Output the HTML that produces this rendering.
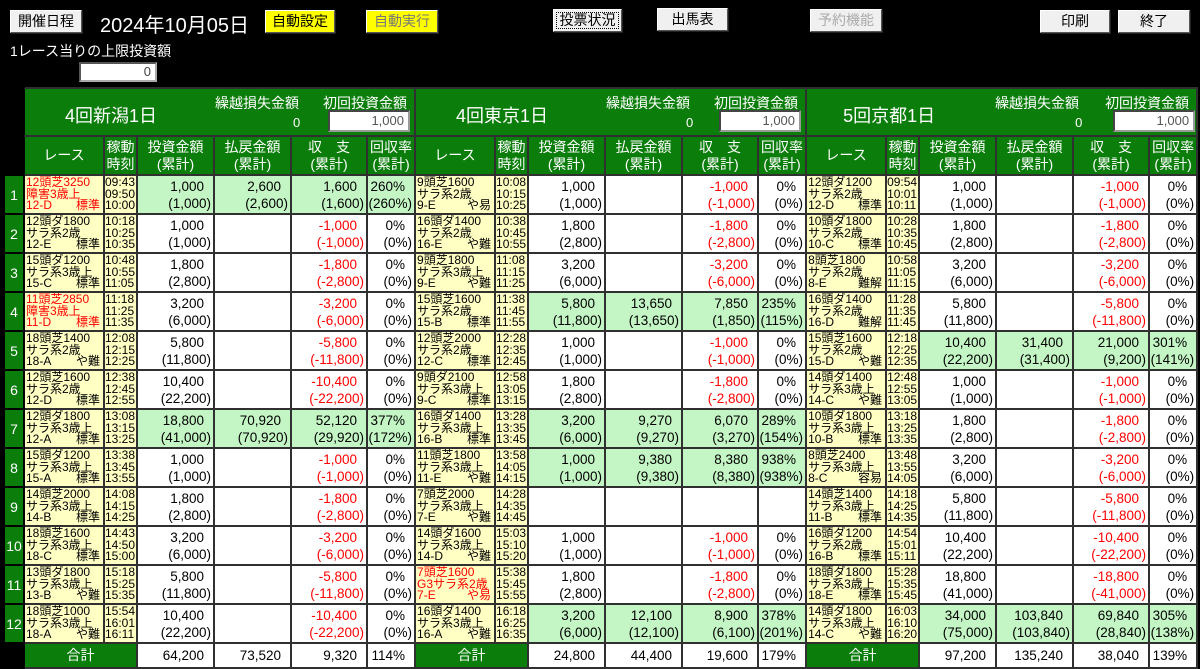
<!DOCTYPE html>
<html><head><meta charset="utf-8"><style>
*{margin:0;padding:0;box-sizing:border-box}
body{width:1200px;height:667px;background:#000;overflow:hidden;position:relative;font-family:"Liberation Sans","Noto Sans CJK JP",sans-serif;color:#000}
.btn{position:absolute;background:#f0f0f0;border:1px solid #fff;border-right-color:#555;border-bottom-color:#555;box-shadow:1px 1px 0 #222;font-size:14px;text-align:center;line-height:21px;height:23px}
.y{background:#ffff00}
.lbl{position:absolute;color:#fff}
.inp{position:absolute;background:#fff;border:2px inset #aaa;text-align:right;font-size:13px;color:#444;padding-right:4px;line-height:16px}
table{position:absolute;left:3px;top:87px;border-collapse:collapse;table-layout:fixed;width:1193px}
td{border:2px solid #303030;overflow:hidden;white-space:nowrap;vertical-align:middle}
tr.d{height:39px}
td.no{background:#0a7d0a;color:#fff;text-align:center;font-size:14px;border-color:#000}
td.bk{background:#000;border-color:#000}
td.hd{background:#0a7d0a;color:#fff;text-align:center;font-size:14px;line-height:17px}
td.r{background:#ffffc4;font-size:12px;line-height:11.5px;padding:0 1px}
td.r div{height:11.5px}
td.r div.s{display:flex;justify-content:space-between;padding-right:2px}
td.t{background:#ffffc4;font-size:12px;line-height:11.5px;padding-left:0}
td.n{background:#fff;text-align:right;font-size:13.5px;line-height:17px;padding-right:2px}
td.n b{display:block;font-weight:normal;padding-right:7px}
td.n i{display:block;font-style:normal}
td.g{background:#c4f5c4}
.red{color:#f00}
td.sec{background:#0a7d0a;position:relative;height:47px;color:#fff}
.vn{position:absolute;top:13px;font-size:18px}
.k1{position:absolute;top:4px;font-size:14px}
.k0{position:absolute;top:26px;font-size:13px}
.k2{position:absolute;top:4px;font-size:14px}
.sin{position:absolute;top:21px;width:82px;height:22px;background:#fff;border:2px inset #999;color:#555;text-align:right;padding-right:4px;font-size:13px;line-height:18px}
tr.tot{height:25px}
tr.tot td.n{font-size:13.5px}
</style></head><body>
<div class="btn" style="left:10px;top:10px;width:72px">開催日程</div>
<div class="lbl" style="left:100px;top:9px;font-size:20px">2024年10月05日</div>
<div class="btn y" style="left:265px;top:10px;width:70px">自動設定</div>
<div class="btn y" style="left:366px;top:10px;width:72px;color:#777">自動実行</div>
<div class="btn" style="left:553px;top:9px;width:69px;outline:1px dotted #000;outline-offset:-4px">投票状況</div>
<div class="btn" style="left:657px;top:8px;width:71px">出馬表</div>
<div class="btn" style="left:810px;top:9px;width:72px;color:#aaa">予約機能</div>
<div class="btn" style="left:1040px;top:10px;width:70px">印刷</div>
<div class="btn" style="left:1118px;top:10px;width:72px">終了</div>
<div class="lbl" style="left:10px;top:41px;font-size:14px">1レース当りの上限投資額</div>
<div class="inp" style="left:79px;top:62px;width:78px;height:20px">0</div>
<table>
<colgroup><col style="width:20px"><col style="width:80px"><col style="width:33px"><col style="width:77px"><col style="width:77px"><col style="width:76px"><col style="width:48px"><col style="width:80px"><col style="width:33px"><col style="width:77px"><col style="width:77px"><col style="width:76px"><col style="width:48px"><col style="width:80px"><col style="width:33px"><col style="width:77px"><col style="width:77px"><col style="width:76px"><col style="width:48px"></colgroup>
<tr style="height:48px"><td class="bk"></td>
<td colspan="6" class="sec"><span class="vn" style="left:40px">4回新潟1日</span><span class="k1" style="left:190px">繰越損失金額</span><span class="k0" style="left:268px">0</span><span class="k2" style="left:298px">初回投資金額</span><div class="sin" style="left:303px">1,000</div></td>
<td colspan="6" class="sec"><span class="vn" style="left:40px">4回東京1日</span><span class="k1" style="left:190px">繰越損失金額</span><span class="k0" style="left:270px">0</span><span class="k2" style="left:298px">初回投資金額</span><div class="sin" style="left:303px">1,000</div></td>
<td colspan="6" class="sec"><span class="vn" style="left:36px">5回京都1日</span><span class="k1" style="left:188px">繰越損失金額</span><span class="k0" style="left:268px">0</span><span class="k2" style="left:298px">初回投資金額</span><div class="sin" style="left:306px">1,000</div></td></tr>
<tr style="height:39px"><td class="bk"></td>
<td class="hd">レース</td><td class="hd">稼動<br>時刻</td><td class="hd">投資金額<br>(累計)</td><td class="hd">払戻金額<br>(累計)</td><td class="hd">収　支<br>(累計)</td><td class="hd">回収率<br>(累計)</td>
<td class="hd">レース</td><td class="hd">稼動<br>時刻</td><td class="hd">投資金額<br>(累計)</td><td class="hd">払戻金額<br>(累計)</td><td class="hd">収　支<br>(累計)</td><td class="hd">回収率<br>(累計)</td>
<td class="hd">レース</td><td class="hd">稼動<br>時刻</td><td class="hd">投資金額<br>(累計)</td><td class="hd">払戻金額<br>(累計)</td><td class="hd">収　支<br>(累計)</td><td class="hd">回収率<br>(累計)</td></tr>

<tr class="d"><td class="no">1</td>
<td class="r red"><div>12頭芝3250</div><div>障害3歳上</div><div class="s"><span>12-D</span><span>標準</span></div></td><td class="t">09:43<br>09:50<br>10:00</td><td class="n g"><b>1,000</b><i>(1,000)</i></td><td class="n g"><b>2,600</b><i>(2,600)</i></td><td class="n g"><b>1,600</b><i>(1,600)</i></td><td class="n g"><b>260%</b><i>(260%)</i></td>
<td class="r"><div>9頭芝1600</div><div>サラ系2歳</div><div class="s"><span>9-E</span><span>や易</span></div></td><td class="t">10:08<br>10:15<br>10:25</td><td class="n"><b>1,000</b><i>(1,000)</i></td><td class="n"></td><td class="n red"><b>-1,000</b><i>(-1,000)</i></td><td class="n"><b>0%</b><i>(0%)</i></td>
<td class="r"><div>12頭ダ1200</div><div>サラ系2歳</div><div class="s"><span>12-D</span><span>標準</span></div></td><td class="t">09:54<br>10:01<br>10:11</td><td class="n"><b>1,000</b><i>(1,000)</i></td><td class="n"></td><td class="n red"><b>-1,000</b><i>(-1,000)</i></td><td class="n"><b>0%</b><i>(0%)</i></td></tr>

<tr class="d"><td class="no">2</td>
<td class="r"><div>12頭ダ1800</div><div>サラ系2歳</div><div class="s"><span>12-E</span><span>標準</span></div></td><td class="t">10:18<br>10:25<br>10:35</td><td class="n"><b>1,000</b><i>(1,000)</i></td><td class="n"></td><td class="n red"><b>-1,000</b><i>(-1,000)</i></td><td class="n"><b>0%</b><i>(0%)</i></td>
<td class="r"><div>16頭ダ1400</div><div>サラ系2歳</div><div class="s"><span>16-E</span><span>や難</span></div></td><td class="t">10:38<br>10:45<br>10:55</td><td class="n"><b>1,800</b><i>(2,800)</i></td><td class="n"></td><td class="n red"><b>-1,800</b><i>(-2,800)</i></td><td class="n"><b>0%</b><i>(0%)</i></td>
<td class="r"><div>10頭ダ1800</div><div>サラ系2歳</div><div class="s"><span>10-C</span><span>標準</span></div></td><td class="t">10:28<br>10:35<br>10:45</td><td class="n"><b>1,800</b><i>(2,800)</i></td><td class="n"></td><td class="n red"><b>-1,800</b><i>(-2,800)</i></td><td class="n"><b>0%</b><i>(0%)</i></td></tr>

<tr class="d"><td class="no">3</td>
<td class="r"><div>15頭ダ1200</div><div>サラ系3歳上</div><div class="s"><span>15-C</span><span>標準</span></div></td><td class="t">10:48<br>10:55<br>11:05</td><td class="n"><b>1,800</b><i>(2,800)</i></td><td class="n"></td><td class="n red"><b>-1,800</b><i>(-2,800)</i></td><td class="n"><b>0%</b><i>(0%)</i></td>
<td class="r"><div>9頭芝1800</div><div>サラ系3歳上</div><div class="s"><span>9-E</span><span>や難</span></div></td><td class="t">11:08<br>11:15<br>11:25</td><td class="n"><b>3,200</b><i>(6,000)</i></td><td class="n"></td><td class="n red"><b>-3,200</b><i>(-6,000)</i></td><td class="n"><b>0%</b><i>(0%)</i></td>
<td class="r"><div>8頭芝1800</div><div>サラ系2歳</div><div class="s"><span>8-E</span><span>難解</span></div></td><td class="t">10:58<br>11:05<br>11:15</td><td class="n"><b>3,200</b><i>(6,000)</i></td><td class="n"></td><td class="n red"><b>-3,200</b><i>(-6,000)</i></td><td class="n"><b>0%</b><i>(0%)</i></td></tr>

<tr class="d"><td class="no">4</td>
<td class="r red"><div>11頭芝2850</div><div>障害3歳上</div><div class="s"><span>11-D</span><span>標準</span></div></td><td class="t">11:18<br>11:25<br>11:35</td><td class="n"><b>3,200</b><i>(6,000)</i></td><td class="n"></td><td class="n red"><b>-3,200</b><i>(-6,000)</i></td><td class="n"><b>0%</b><i>(0%)</i></td>
<td class="r"><div>15頭芝1600</div><div>サラ系2歳</div><div class="s"><span>15-B</span><span>標準</span></div></td><td class="t">11:38<br>11:45<br>11:55</td><td class="n g"><b>5,800</b><i>(11,800)</i></td><td class="n g"><b>13,650</b><i>(13,650)</i></td><td class="n g"><b>7,850</b><i>(1,850)</i></td><td class="n g"><b>235%</b><i>(115%)</i></td>
<td class="r"><div>16頭ダ1400</div><div>サラ系2歳</div><div class="s"><span>16-D</span><span>難解</span></div></td><td class="t">11:28<br>11:35<br>11:45</td><td class="n"><b>5,800</b><i>(11,800)</i></td><td class="n"></td><td class="n red"><b>-5,800</b><i>(-11,800)</i></td><td class="n"><b>0%</b><i>(0%)</i></td></tr>

<tr class="d"><td class="no">5</td>
<td class="r"><div>18頭芝1400</div><div>サラ系2歳</div><div class="s"><span>18-A</span><span>や難</span></div></td><td class="t">12:08<br>12:15<br>12:25</td><td class="n"><b>5,800</b><i>(11,800)</i></td><td class="n"></td><td class="n red"><b>-5,800</b><i>(-11,800)</i></td><td class="n"><b>0%</b><i>(0%)</i></td>
<td class="r"><div>12頭芝2000</div><div>サラ系2歳</div><div class="s"><span>12-C</span><span>標準</span></div></td><td class="t">12:28<br>12:35<br>12:45</td><td class="n"><b>1,000</b><i>(1,000)</i></td><td class="n"></td><td class="n red"><b>-1,000</b><i>(-1,000)</i></td><td class="n"><b>0%</b><i>(0%)</i></td>
<td class="r"><div>15頭芝1600</div><div>サラ系2歳</div><div class="s"><span>15-D</span><span>や難</span></div></td><td class="t">12:18<br>12:25<br>12:35</td><td class="n g"><b>10,400</b><i>(22,200)</i></td><td class="n g"><b>31,400</b><i>(31,400)</i></td><td class="n g"><b>21,000</b><i>(9,200)</i></td><td class="n g"><b>301%</b><i>(141%)</i></td></tr>

<tr class="d"><td class="no">6</td>
<td class="r"><div>12頭芝1600</div><div>サラ系2歳</div><div class="s"><span>12-D</span><span>標準</span></div></td><td class="t">12:38<br>12:45<br>12:55</td><td class="n"><b>10,400</b><i>(22,200)</i></td><td class="n"></td><td class="n red"><b>-10,400</b><i>(-22,200)</i></td><td class="n"><b>0%</b><i>(0%)</i></td>
<td class="r"><div>9頭ダ2100</div><div>サラ系3歳上</div><div class="s"><span>9-C</span><span>標準</span></div></td><td class="t">12:58<br>13:05<br>13:15</td><td class="n"><b>1,800</b><i>(2,800)</i></td><td class="n"></td><td class="n red"><b>-1,800</b><i>(-2,800)</i></td><td class="n"><b>0%</b><i>(0%)</i></td>
<td class="r"><div>14頭ダ1400</div><div>サラ系3歳上</div><div class="s"><span>14-C</span><span>や難</span></div></td><td class="t">12:48<br>12:55<br>13:05</td><td class="n"><b>1,000</b><i>(1,000)</i></td><td class="n"></td><td class="n red"><b>-1,000</b><i>(-1,000)</i></td><td class="n"><b>0%</b><i>(0%)</i></td></tr>

<tr class="d"><td class="no">7</td>
<td class="r"><div>12頭ダ1800</div><div>サラ系3歳上</div><div class="s"><span>12-A</span><span>標準</span></div></td><td class="t">13:08<br>13:15<br>13:25</td><td class="n g"><b>18,800</b><i>(41,000)</i></td><td class="n g"><b>70,920</b><i>(70,920)</i></td><td class="n g"><b>52,120</b><i>(29,920)</i></td><td class="n g"><b>377%</b><i>(172%)</i></td>
<td class="r"><div>16頭ダ1400</div><div>サラ系3歳上</div><div class="s"><span>16-B</span><span>標準</span></div></td><td class="t">13:28<br>13:35<br>13:45</td><td class="n g"><b>3,200</b><i>(6,000)</i></td><td class="n g"><b>9,270</b><i>(9,270)</i></td><td class="n g"><b>6,070</b><i>(3,270)</i></td><td class="n g"><b>289%</b><i>(154%)</i></td>
<td class="r"><div>10頭ダ1800</div><div>サラ系3歳上</div><div class="s"><span>10-B</span><span>標準</span></div></td><td class="t">13:18<br>13:25<br>13:35</td><td class="n"><b>1,800</b><i>(2,800)</i></td><td class="n"></td><td class="n red"><b>-1,800</b><i>(-2,800)</i></td><td class="n"><b>0%</b><i>(0%)</i></td></tr>

<tr class="d"><td class="no">8</td>
<td class="r"><div>15頭ダ1200</div><div>サラ系3歳上</div><div class="s"><span>15-A</span><span>標準</span></div></td><td class="t">13:38<br>13:45<br>13:55</td><td class="n"><b>1,000</b><i>(1,000)</i></td><td class="n"></td><td class="n red"><b>-1,000</b><i>(-1,000)</i></td><td class="n"><b>0%</b><i>(0%)</i></td>
<td class="r"><div>11頭芝1800</div><div>サラ系3歳上</div><div class="s"><span>11-E</span><span>や難</span></div></td><td class="t">13:58<br>14:05<br>14:15</td><td class="n g"><b>1,000</b><i>(1,000)</i></td><td class="n g"><b>9,380</b><i>(9,380)</i></td><td class="n g"><b>8,380</b><i>(8,380)</i></td><td class="n g"><b>938%</b><i>(938%)</i></td>
<td class="r"><div>8頭芝2400</div><div>サラ系3歳上</div><div class="s"><span>8-C</span><span>容易</span></div></td><td class="t">13:48<br>13:55<br>14:05</td><td class="n"><b>3,200</b><i>(6,000)</i></td><td class="n"></td><td class="n red"><b>-3,200</b><i>(-6,000)</i></td><td class="n"><b>0%</b><i>(0%)</i></td></tr>

<tr class="d"><td class="no">9</td>
<td class="r"><div>14頭芝2000</div><div>サラ系3歳上</div><div class="s"><span>14-B</span><span>標準</span></div></td><td class="t">14:08<br>14:15<br>14:25</td><td class="n"><b>1,800</b><i>(2,800)</i></td><td class="n"></td><td class="n red"><b>-1,800</b><i>(-2,800)</i></td><td class="n"><b>0%</b><i>(0%)</i></td>
<td class="r"><div>7頭芝2000</div><div>サラ系3歳上</div><div class="s"><span>7-E</span><span>や難</span></div></td><td class="t">14:28<br>14:35<br>14:45</td><td class="n"></td><td class="n"></td><td class="n"></td><td class="n"></td>
<td class="r"><div>14頭芝1400</div><div>サラ系3歳上</div><div class="s"><span>11-B</span><span>標準</span></div></td><td class="t">14:18<br>14:25<br>14:35</td><td class="n"><b>5,800</b><i>(11,800)</i></td><td class="n"></td><td class="n red"><b>-5,800</b><i>(-11,800)</i></td><td class="n"><b>0%</b><i>(0%)</i></td></tr>

<tr class="d"><td class="no">10</td>
<td class="r"><div>18頭芝1600</div><div>サラ系3歳上</div><div class="s"><span>18-C</span><span>標準</span></div></td><td class="t">14:43<br>14:50<br>15:00</td><td class="n"><b>3,200</b><i>(6,000)</i></td><td class="n"></td><td class="n red"><b>-3,200</b><i>(-6,000)</i></td><td class="n"><b>0%</b><i>(0%)</i></td>
<td class="r"><div>14頭ダ1600</div><div>サラ系3歳上</div><div class="s"><span>14-D</span><span>や難</span></div></td><td class="t">15:03<br>15:10<br>15:20</td><td class="n"><b>1,000</b><i>(1,000)</i></td><td class="n"></td><td class="n red"><b>-1,000</b><i>(-1,000)</i></td><td class="n"><b>0%</b><i>(0%)</i></td>
<td class="r"><div>16頭ダ1200</div><div>サラ系2歳</div><div class="s"><span>16-B</span><span>標準</span></div></td><td class="t">14:54<br>15:01<br>15:11</td><td class="n"><b>10,400</b><i>(22,200)</i></td><td class="n"></td><td class="n red"><b>-10,400</b><i>(-22,200)</i></td><td class="n"><b>0%</b><i>(0%)</i></td></tr>

<tr class="d"><td class="no">11</td>
<td class="r"><div>13頭ダ1800</div><div>サラ系3歳上</div><div class="s"><span>13-B</span><span>や難</span></div></td><td class="t">15:18<br>15:25<br>15:35</td><td class="n"><b>5,800</b><i>(11,800)</i></td><td class="n"></td><td class="n red"><b>-5,800</b><i>(-11,800)</i></td><td class="n"><b>0%</b><i>(0%)</i></td>
<td class="r red"><div>7頭芝1600</div><div>G3サラ系2歳</div><div class="s"><span>7-E</span><span>や易</span></div></td><td class="t">15:38<br>15:45<br>15:55</td><td class="n"><b>1,800</b><i>(2,800)</i></td><td class="n"></td><td class="n red"><b>-1,800</b><i>(-2,800)</i></td><td class="n"><b>0%</b><i>(0%)</i></td>
<td class="r"><div>18頭ダ1800</div><div>サラ系3歳上</div><div class="s"><span>18-E</span><span>標準</span></div></td><td class="t">15:28<br>15:35<br>15:45</td><td class="n"><b>18,800</b><i>(41,000)</i></td><td class="n"></td><td class="n red"><b>-18,800</b><i>(-41,000)</i></td><td class="n"><b>0%</b><i>(0%)</i></td></tr>

<tr class="d"><td class="no">12</td>
<td class="r"><div>18頭芝1000</div><div>サラ系3歳上</div><div class="s"><span>18-A</span><span>や難</span></div></td><td class="t">15:54<br>16:01<br>16:11</td><td class="n"><b>10,400</b><i>(22,200)</i></td><td class="n"></td><td class="n red"><b>-10,400</b><i>(-22,200)</i></td><td class="n"><b>0%</b><i>(0%)</i></td>
<td class="r"><div>16頭ダ1400</div><div>サラ系3歳上</div><div class="s"><span>16-A</span><span>や難</span></div></td><td class="t">16:18<br>16:25<br>16:35</td><td class="n g"><b>3,200</b><i>(6,000)</i></td><td class="n g"><b>12,100</b><i>(12,100)</i></td><td class="n g"><b>8,900</b><i>(6,100)</i></td><td class="n g"><b>378%</b><i>(201%)</i></td>
<td class="r"><div>14頭ダ1800</div><div>サラ系3歳上</div><div class="s"><span>14-C</span><span>や難</span></div></td><td class="t">16:03<br>16:10<br>16:20</td><td class="n g"><b>34,000</b><i>(75,000)</i></td><td class="n g"><b>103,840</b><i>(103,840)</i></td><td class="n g"><b>69,840</b><i>(28,840)</i></td><td class="n g"><b>305%</b><i>(138%)</i></td></tr>

<tr class="tot"><td class="bk"></td>
<td colspan="2" class="hd">合計</td><td class="n"><b>64,200</b></td><td class="n"><b>73,520</b></td><td class="n"><b>9,320</b></td><td class="n"><b>114%</b></td>
<td colspan="2" class="hd">合計</td><td class="n"><b>24,800</b></td><td class="n"><b>44,400</b></td><td class="n"><b>19,600</b></td><td class="n"><b>179%</b></td>
<td colspan="2" class="hd">合計</td><td class="n"><b>97,200</b></td><td class="n"><b>135,240</b></td><td class="n"><b>38,040</b></td><td class="n"><b>139%</b></td></tr>
</table>
</body></html>
